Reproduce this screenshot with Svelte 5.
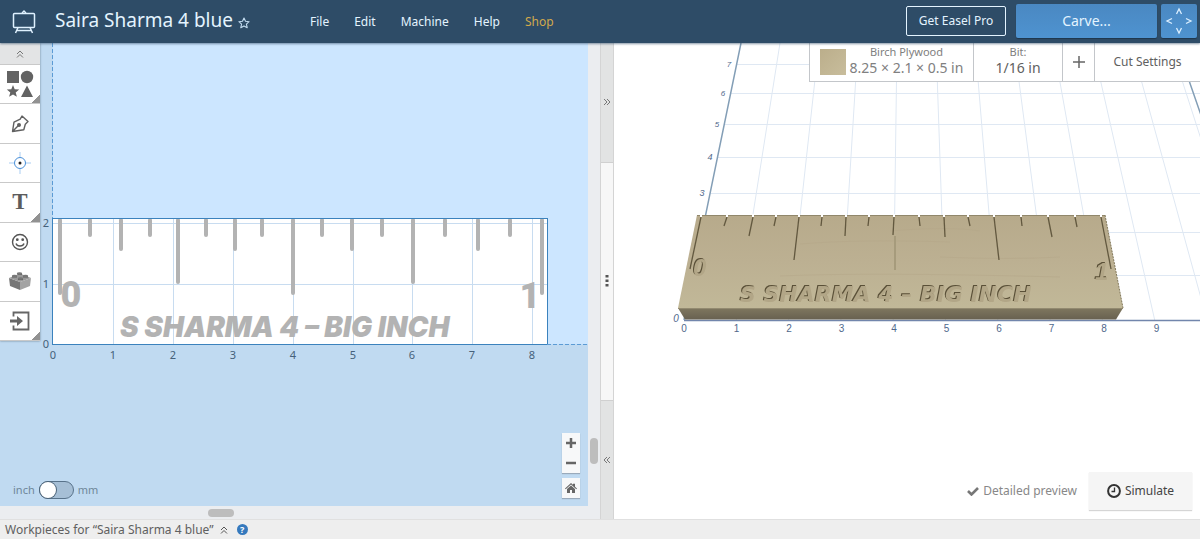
<script>
  const menus = ['File', 'Edit', 'Machine', 'Help'];

  // Ruler ticks on the flat design: x position and lower end
  const ticks = [
    [60, 293], [90, 235], [121, 249], [150, 235], [178, 282], [206, 235], [235, 249], [262, 235], [293, 293],
    [322, 235], [352, 249], [382, 235], [413, 282], [445, 235], [478, 249], [510, 235], [542, 293]
  ];
  const inches = [0, 1, 2, 3, 4, 5, 6, 7, 8];
  const xAt = (n) => Math.round(13 + n * 59.9);

  // Carved ticks on the preview board: top x, bottom x, bottom y
  const cuts = [
    [701, 690, 269], [727, 724, 226], [753, 749, 236], [776, 774, 226], [799, 794, 260], [822, 821, 226],
    [846, 845, 236], [869, 868, 226], [894, 893, 235], [919, 920, 226], [944, 945, 237], [968, 970, 226],
    [994, 999, 260], [1021, 1022, 226], [1048, 1052, 237], [1075, 1077, 227], [1101, 1111, 269]
  ];
  const columns = [1, 2, 3, 4, 5, 6, 7, 8, 9, 10, 11];
  const topX = (k) => 741 + k * 39;
  const bottomX = (k) => 684 + k * 52.3;
  const rows = [64, 93, 124, 157, 193, 232, 275];
  const rowLabels = [[729, 67, 7, 8], [723, 96, 6, 8], [717, 127, 5, 8], [710, 160, 4, 9], [702, 196, 3, 9], [676, 322, 0, 10]];

  let metric = $state(false);
</script>

<div class="app">
  <header>
    <button class="logo" aria-label="Home">
      <svg width="24" height="26" viewBox="0 0 24 26" fill="none" stroke="#dff1ff" stroke-width="1.5">
        <rect x="1.5" y="4.5" width="21" height="14" rx="1" />
        <path d="M10.500 4.500V3.500L12 2l1.500 1.500v1M6 18.500L3.500 24M18 18.500L20.500 24M5 21.500h14" />
      </svg>
    </button>
    <h1>Saira Sharma 4 blue</h1>
    <button class="star" aria-label="Favorite">
      <svg width="12" height="12" viewBox="0 0 12 12" fill="none" stroke="#c3dcf0" stroke-width="1.100" stroke-linejoin="round">
        <path d="M6 1l1.500 3.300 3.600.4-2.700 2.400.8 3.600L6 8.900l-3.200 1.800.8-3.600L.9 4.700l3.600-.4z" />
      </svg>
    </button>
    <nav>
      {#each menus as item}<button>{item}</button>{/each}
      <a href="#shop">Shop</a>
    </nav>
    <button class="pro">Get Easel Pro</button>
    <button class="carve">Carve...</button>
    <button class="jog" aria-label="Jog machine">
      <svg width="30" height="30" viewBox="0 0 30 30" fill="none" stroke="#dcefff" stroke-width="1.300">
        <path d="M12.500 8L15 3l2.500 5M12.500 22l2.500 5 2.500-5M8 12.500L3 15l5 2.500M22 12.500l5 2.500-5 2.500" />
      </svg>
    </button>
  </header>

  <main>
    <section class="design">
      <div class="tools">
        <button class="collapse" aria-label="Collapse tools">
          <svg width="8" height="8" viewBox="0 0 8 8" fill="none" stroke="#777"><path d="M1 4l3-3 3 3M1 7.500l3-3 3 3" /></svg>
        </button>
        <button class="more" aria-label="Shapes">
          <svg width="28" height="28" viewBox="0 0 28 28" fill="#636363">
            <path d="M1 1h12v12H1zM21 15.500L27 27H15zM7 15l1.700 4.200 4.500.3-3.500 2.900 1.200 4.400L7 24.400l-3.900 2.400 1.200-4.400-3.500-2.900 4.500-.3z" />
            <circle cx="21" cy="7" r="6.200" />
          </svg>
        </button>
        <button aria-label="Pen">
          <svg width="20" height="20" viewBox="0 0 20 20" fill="none" stroke="#606060" stroke-width="1.400" stroke-linejoin="round">
            <path d="M2.500 17.500L4 8.200l6.200-3L12 2l6 5.500-2.700 2.800-1.500 5.400zM2.500 17.500l5.700-5.700" /><circle cx="9" cy="11" r="1.300" fill="#606060" />
          </svg>
        </button>
        <button aria-label="Drill point">
          <svg width="22" height="22" viewBox="0 0 22 22" fill="none" stroke="#4a90d9">
            <circle cx="11" cy="11" r="5.500" /><path d="M11 0v5M11 17v5M0 11h5M17 11h5" stroke="#a9cdf2" /><circle cx="11" cy="11" r="1.500" fill="#222" stroke="none" />
          </svg>
        </button>
        <button class="more letter">T</button>
        <button aria-label="Icons">
          <svg width="18" height="18" viewBox="0 0 18 18" fill="none" stroke="#555" stroke-width="1.400">
            <circle cx="9" cy="9" r="7.500" /><path d="M5 10.500c1 3.300 7 3.300 8 0" /><circle cx="6.300" cy="6.700" r=".7" fill="#555" /><circle cx="11.700" cy="6.700" r=".7" fill="#555" />
          </svg>
        </button>
        <button aria-label="Apps">
          <svg width="24" height="20" viewBox="0 0 24 20">
            <path d="M1 7l11 4v8L2 15z" fill="#777" /><path d="M12 11l11-4-1 8-10 4z" fill="#a3a3a3" /><path d="M1 7l11-4.500L23 7l-11 4z" fill="#999" />
            <g fill="#636363"><path d="M9.500 2.500h4.500V4H9.500zM4 5h5v1.500H4zM15 5h5v1.500h-5zM10 7.500h5V9h-5z" /></g>
            <g fill="#777"><ellipse cx="11.500" cy="2.500" rx="2.700" ry="1.300" /><ellipse cx="6.500" cy="5" rx="2.700" ry="1.300" /><ellipse cx="17.500" cy="5" rx="2.700" ry="1.300" /><ellipse cx="12.500" cy="7.500" rx="2.700" ry="1.300" /></g>
          </svg>
        </button>
        <button class="more" aria-label="Import">
          <svg width="20" height="20" viewBox="0 0 20 20" fill="none" stroke="#666" stroke-width="1.800">
            <path d="M3.500 5.500V1.500h15v17h-15v-4" /><path d="M0 8.500h7V5l6 5-6 5v-3.500H0z" fill="#666" stroke="none" />
          </svg>
        </button>
      </div>

      <div class="canvas">
        <svg class="plane" role="img" aria-label="Design canvas">
          <rect x="13" width="100%" height="301" fill="#cce6ff" />
          <rect x="13" y="175" width="494" height="126" fill="#fff" />
          {#each inches.slice(1) as n}<path d="M{xAt(n)}.5 175V301" stroke="#c8dcf0" />{/each}
          <path d="M13 180.500H507M13 241.500H507" stroke="#c8dcf0" />
          <g transform="translate(-40 -43)">
            {#each ticks as [x, y]}<path d="M{x} 220V{y}" stroke="#b3b3b3" stroke-width="4" stroke-linecap="round" />{/each}
            <g fill="#b3b3b3">
              <text class="digit" x="71" y="307">0</text>
              <text class="digit" x="530" y="308">1</text>
              <text class="slogan" x="120" y="337">S SHARMA 4 – BIG INCH</text>
            </g>
          </g>
          <rect x="12.500" y="175.500" width="495" height="126" fill="none" stroke="#3b82bd" />
          <path d="M12.500 0V175" stroke="#5b9bd5" stroke-dasharray="4 2" />
          <line x1="507" y1="301.500" x2="100%" y2="301.500" stroke="#5b9bd5" stroke-dasharray="4 2" />
          <g class="axis">
            {#each inches as n}<text x={xAt(n)} y="316">{n}</text>{/each}
            <text x="6" y="305">0</text><text x="6" y="245">1</text><text x="6" y="184">2</text>
          </g>
        </svg>
        <label class="units">
          <span>inch</span><input type="checkbox" bind:checked={metric} aria-label="Use millimetres" /><span>mm</span>
        </label>
        <div class="zoom">
          <div class="pair">
            <button aria-label="Zoom in"><svg width="10" height="10" viewBox="0 0 10 10"><path d="M0 5h10M5 0v10" stroke="#666" stroke-width="2.500" /></svg></button>
            <button aria-label="Zoom out"><svg width="10" height="10" viewBox="0 0 10 10"><path d="M0 5h10" stroke="#666" stroke-width="2.500" /></svg></button>
          </div>
          <button class="home" aria-label="Fit view"><svg width="12" height="10" viewBox="0 0 12 10" fill="#666"><path d="M6 0l2 1.800V.7h2v3L12 5.400l-.7.8L6 1.600.7 6.200 0 5.400z" /><path d="M6 2.600l4 3.500V10H7V7H5v3H2V6.100z" /></svg></button>
        </div>
      </div>
      <div class="vscroll"><i></i></div>
      <div class="hscroll"><i></i></div>
    </section>

    <div class="splitter">
      <button aria-label="Expand design"><svg width="8" height="8" viewBox="0 0 8 8" fill="none" stroke="#777"><path d="M1 1l3 3-3 3M4 1l3 3-3 3" /></svg></button>
      <button class="grip" aria-label="Resize panels"><svg width="4" height="12" viewBox="0 0 4 12" fill="#555"><path d="M.5 0h3v2.500h-3zM.5 4.500h3V7h-3zM.5 9h3v2.500h-3z" /></svg></button>
      <button aria-label="Expand preview"><svg width="8" height="8" viewBox="0 0 8 8" fill="none" stroke="#777"><path d="M4 1L1 4l3 3M7 1L4 4l3 3" /></svg></button>
    </div>

    <section class="preview">
      <svg class="scene" viewBox="614 43 586 477" preserveAspectRatio="xMidYMin slice" role="img" aria-label="Board preview">
        <defs>
          <linearGradient id="face" x2="0" y2="1"><stop offset="0" stop-color="#b7aa8b" /><stop offset=".5" stop-color="#bcb092" /><stop offset="1" stop-color="#c1b898" /></linearGradient>
          <linearGradient id="edge" x2="0" y2="1"><stop offset="0" stop-color="#7f775f" /><stop offset="1" stop-color="#686150" /></linearGradient>
        </defs>
        <g stroke="#dfe8f3" fill="none">
          {#each columns as k}<path d="M{topX(k)} 43L{bottomX(k)} 320" />{/each}
          {#each rows as y}<path d="M{741 - (y - 43) * 0.205} {y}.5H1200" />{/each}
        </g>
        <path d="M741 43L684 320M1176 43L1272 320" stroke="#839eb6" stroke-width="1.500" />
        <path d="M684 320.500H1200" stroke="#7286ac" stroke-width="1.500" />
        <path d="M697 215H1105L1123 308H678z" fill="url(#face)" />
        <path d="M678 308H1123L1116 319.500H685z" fill="url(#edge)" />
        <path d="M678 308.500H1123" stroke="#938a70" />
        <path d="M697 215.500H1105" stroke="#91876b" />
        <path d="M1105 215L1123 308" stroke="#817759" stroke-dasharray="2 1" />
        <g stroke="#b3a687" opacity=".5" fill="none"><path d="M800 244q60-5 150-2M890 231q60-5 90 0M940 257q70 3 120 0M780 276q90-4 280 1" /></g>
        {#each cuts as [x1, x2, y]}
          <path d="M{x1} 217L{x2} {y}" stroke="#62583f" stroke-width="1.300" />
          <path d="M{x1} 214v3" stroke="#fff" stroke-width="2" />
        {/each}
        <path d="M895 236V270" stroke="#a69b7c" stroke-width="2" />
        <g class="carved">
          <text class="big" x="693" y="276">0</text>
          <text class="big" x="1095" y="280">1</text>
          <text x="740" y="302">S SHARMA 4 – BIG INCH</text>
        </g>
        <g class="axis3d">
          {#each [0, 1, 2, 3, 4, 5, 6, 7, 8, 9] as n}<text x={684 + n * 52.5} y="332">{n}</text>{/each}
          {#each rowLabels as [x, y, n, size]}<text class="row" {x} {y} font-size={size}>{n}</text>{/each}
        </g>
      </svg>
      <div class="job">
        <button class="material"><i></i><span><small>Birch Plywood</small><b>8.25 × 2.1 × 0.5 in</b></span></button>
        <button class="bit"><small>Bit:</small><b>1/16 in</b></button>
        <button class="add" aria-label="Add bit"><svg width="12" height="12" viewBox="0 0 12 12"><path d="M0 6h12M6 0v12" stroke="#666" stroke-width="1.500" /></svg></button>
        <button class="cut">Cut Settings</button>
      </div>
      <div class="actions">
        <button class="detail"><svg width="12" height="10" viewBox="0 0 12 10"><path d="M1 5l3.500 3.500L11 2" fill="none" stroke="#777" stroke-width="2.600" /></svg>Detailed preview</button>
        <button class="simulate"><svg width="14" height="14" viewBox="0 0 14 14" fill="none" stroke="#333"><circle cx="7" cy="7" r="5.900" stroke-width="2" /><path d="M7.500 3.500v4H4.500" stroke-width="1.300" /></svg>Simulate</button>
      </div>
    </section>
  </main>

  <footer>
    <button>Workpieces for “Saira Sharma 4 blue”
      <svg width="8" height="8" viewBox="0 0 8 8" fill="none" stroke="#555"><path d="M1 4l3-3 3 3M1 7.500l3-3 3 3" /></svg>
    </button>
    <button class="help" aria-label="Help">?</button>
  </footer>
</div>

<style>
  :global(body) { margin: 0; }
  .app { display: grid; grid-template-rows: 43px 1fr 20px; height: 100vh; min-height: 480px; font: 12px/16px "Noto Sans", sans-serif; color: #606060; background: #fff; }
  button { font: inherit; color: inherit; border: 0; padding: 0; margin: 0; background: none; display: flex; align-items: center; justify-content: center; white-space: nowrap; }
  svg { display: block; flex: none; }
  header { display: flex; align-items: center; background: #2e4c67; color: #e4f4ff; padding: 0 3px 0 12px; box-shadow: 0 1px 2px #35506a99; position: relative; z-index: 2; }
  h1 { font-size: 19px; line-height: 24px; font-weight: 400; margin: 0 5px 3px 19px; white-space: nowrap; }
  .star { margin-top: 2px; }
  nav { display: flex; gap: 25px; margin-left: 60px; flex: 1; }
  nav a { color: #d2a94c; text-decoration: none; }
  .pro { width: 100px; height: 30px; border: 1px solid #e4f4ff; border-radius: 2px; margin-right: 10px; margin-bottom: 2px; }
  .carve { width: 141px; height: 34px; font-size: 14px; margin-right: 4px; }
  .jog { width: 36px; height: 34px; }
  .carve, .jog { background: linear-gradient(#4a88c2, #4e93d0); border-radius: 2px; box-shadow: 0 1px 1px #1f374d; margin-bottom: 1px; }
  main { display: flex; min-height: 0; }
  .design { flex: 600; min-width: 0; display: grid; grid-template: 1fr 13px / 40px 1fr 12px; background: #ebedf0; }
  .canvas { position: relative; grid-area: 1 / 1 / 2 / 3; margin-left: 40px; background: #c0daf1; }
  .design::before { content: ""; grid-area: 1 / 1; background: #c0daf1; }
  .tools { grid-area: 1 / 1; z-index: 1; align-self: start; display: grid; grid-template-rows: 22px repeat(7, 1fr); height: 298px; background: #fff; box-shadow: 0 0 2px #6b7f93; }
  .tools button { position: relative; border-bottom: 1px solid #c9c9c9; }
  .tools .collapse { background: #e3e4e5; }
  .tools .more::after { content: ""; position: absolute; right: 0; bottom: 0; width: 9px; height: 9px; background: linear-gradient(135deg, transparent 50%, #929292 50%); }
  .tools .letter { font: bold 23px/24px "Liberation Serif", serif; color: #5c5c5c; }
  .plane { position: absolute; inset: 0; width: 100%; height: 100%; }
  .digit { font: 900 36px Roboto, sans-serif; text-anchor: middle; }
  .slogan { font: italic 900 28px Inter, sans-serif; }
  .axis { font: 11px "Noto Sans", sans-serif; fill: #45617a; text-anchor: middle; }
  .units { position: absolute; left: -27px; bottom: 7px; display: flex; align-items: center; font-size: 11px; color: #6f8799; gap: 4px; }
  input { appearance: none; margin: 0; width: 35px; height: 18px; box-sizing: border-box; border: 1px solid #58728a; border-radius: 9px; background: #a6bfd6; display: flex; }
  input::before { content: ""; width: 16px; height: 16px; border-radius: 8px; background: #fff; box-shadow: 0 0 0 1px #4d657a; }
  input:checked { justify-content: flex-end; }
  .zoom { position: absolute; right: 8px; bottom: 8px; display: grid; gap: 5px; }
  .pair, .home { background: #f7f8f9; box-shadow: 0 1px 1px #9aaabb; }
  .zoom button { width: 18px; height: 20px; }
  .vscroll { grid-area: 1 / 3; display: flex; justify-content: center; align-items: end; padding-bottom: 42px; box-sizing: border-box; }
  .vscroll i { width: 8px; height: 26px; border-radius: 4px; background: #bdbdbd; }
  .hscroll { grid-area: 2 / 1 / 3 / 4; padding: 3px 0 0 208px; }
  .hscroll i { display: block; width: 26px; height: 8px; border-radius: 4px; background: #bdbdbd; }
  .splitter { width: 14px; box-sizing: border-box; display: flex; flex-direction: column; border: solid #d4d4d4; border-width: 0 1px; background: #e2e3e3; }
  .splitter button { flex: 1; }
  .splitter .grip { flex: 2; background: #f7f7f7; border: solid #d0d0d0; border-width: 1px 0; }
  .preview { flex: 586; min-width: 0; position: relative; background: #fff; overflow: hidden; }
  .scene { width: 100%; height: 100%; }
  .carved { font: italic bold 22px "DejaVu Sans", sans-serif; fill: #b2a687; filter: drop-shadow(-1px -1px 0 #5a5038); }
  .carved .big { font: italic 700 24px "Liberation Sans", sans-serif; }
  .axis3d { font: 10px "Liberation Sans", sans-serif; fill: #50688b; text-anchor: middle; }
  .axis3d .row { font-style: italic; }
  .job { position: absolute; top: 0; right: 0; display: flex; height: 38px; background: #fff; border: solid #c3c6ca; border-width: 0 0 1px 1px; }
  .job button { border-right: 1px solid #c3c6ca; box-sizing: border-box; }
  .job small, .job b { display: block; font-weight: 400; font-size: 11px; line-height: 14px; color: #808080; }
  .job b { font-size: 14px; line-height: 18px; }
  .material span { padding-bottom: 2px; }
  .material { width: 164px; gap: 4px; }
  .material i { width: 26px; height: 26px; background: linear-gradient(135deg, #bbae8b, #c8bd9c); }
  .job .bit { width: 89px; flex-direction: column; padding-bottom: 2px; }
  .job .bit b { color: #606060; }
  .add { width: 32px; }
  .job .cut { width: 105px; border: 0; }
  .actions { position: absolute; right: 8px; bottom: 9px; display: flex; gap: 12px; }
  .detail { gap: 4px; color: #888; }
  .simulate { width: 103px; height: 38px; gap: 4px; background: #f5f5f5; color: #444; box-shadow: 0 1px 1px #d5d5d5; }
  footer { display: flex; align-items: center; gap: 9px; padding-left: 5px; background: #eee; border-top: 1px solid #e0e0e0; box-sizing: border-box; }
  footer button { gap: 6px; }
  .help { width: 11px; height: 11px; border-radius: 50%; background: #3579bd; color: #fff; font-size: 9px; line-height: 11px; font-weight: 700; }
</style>
